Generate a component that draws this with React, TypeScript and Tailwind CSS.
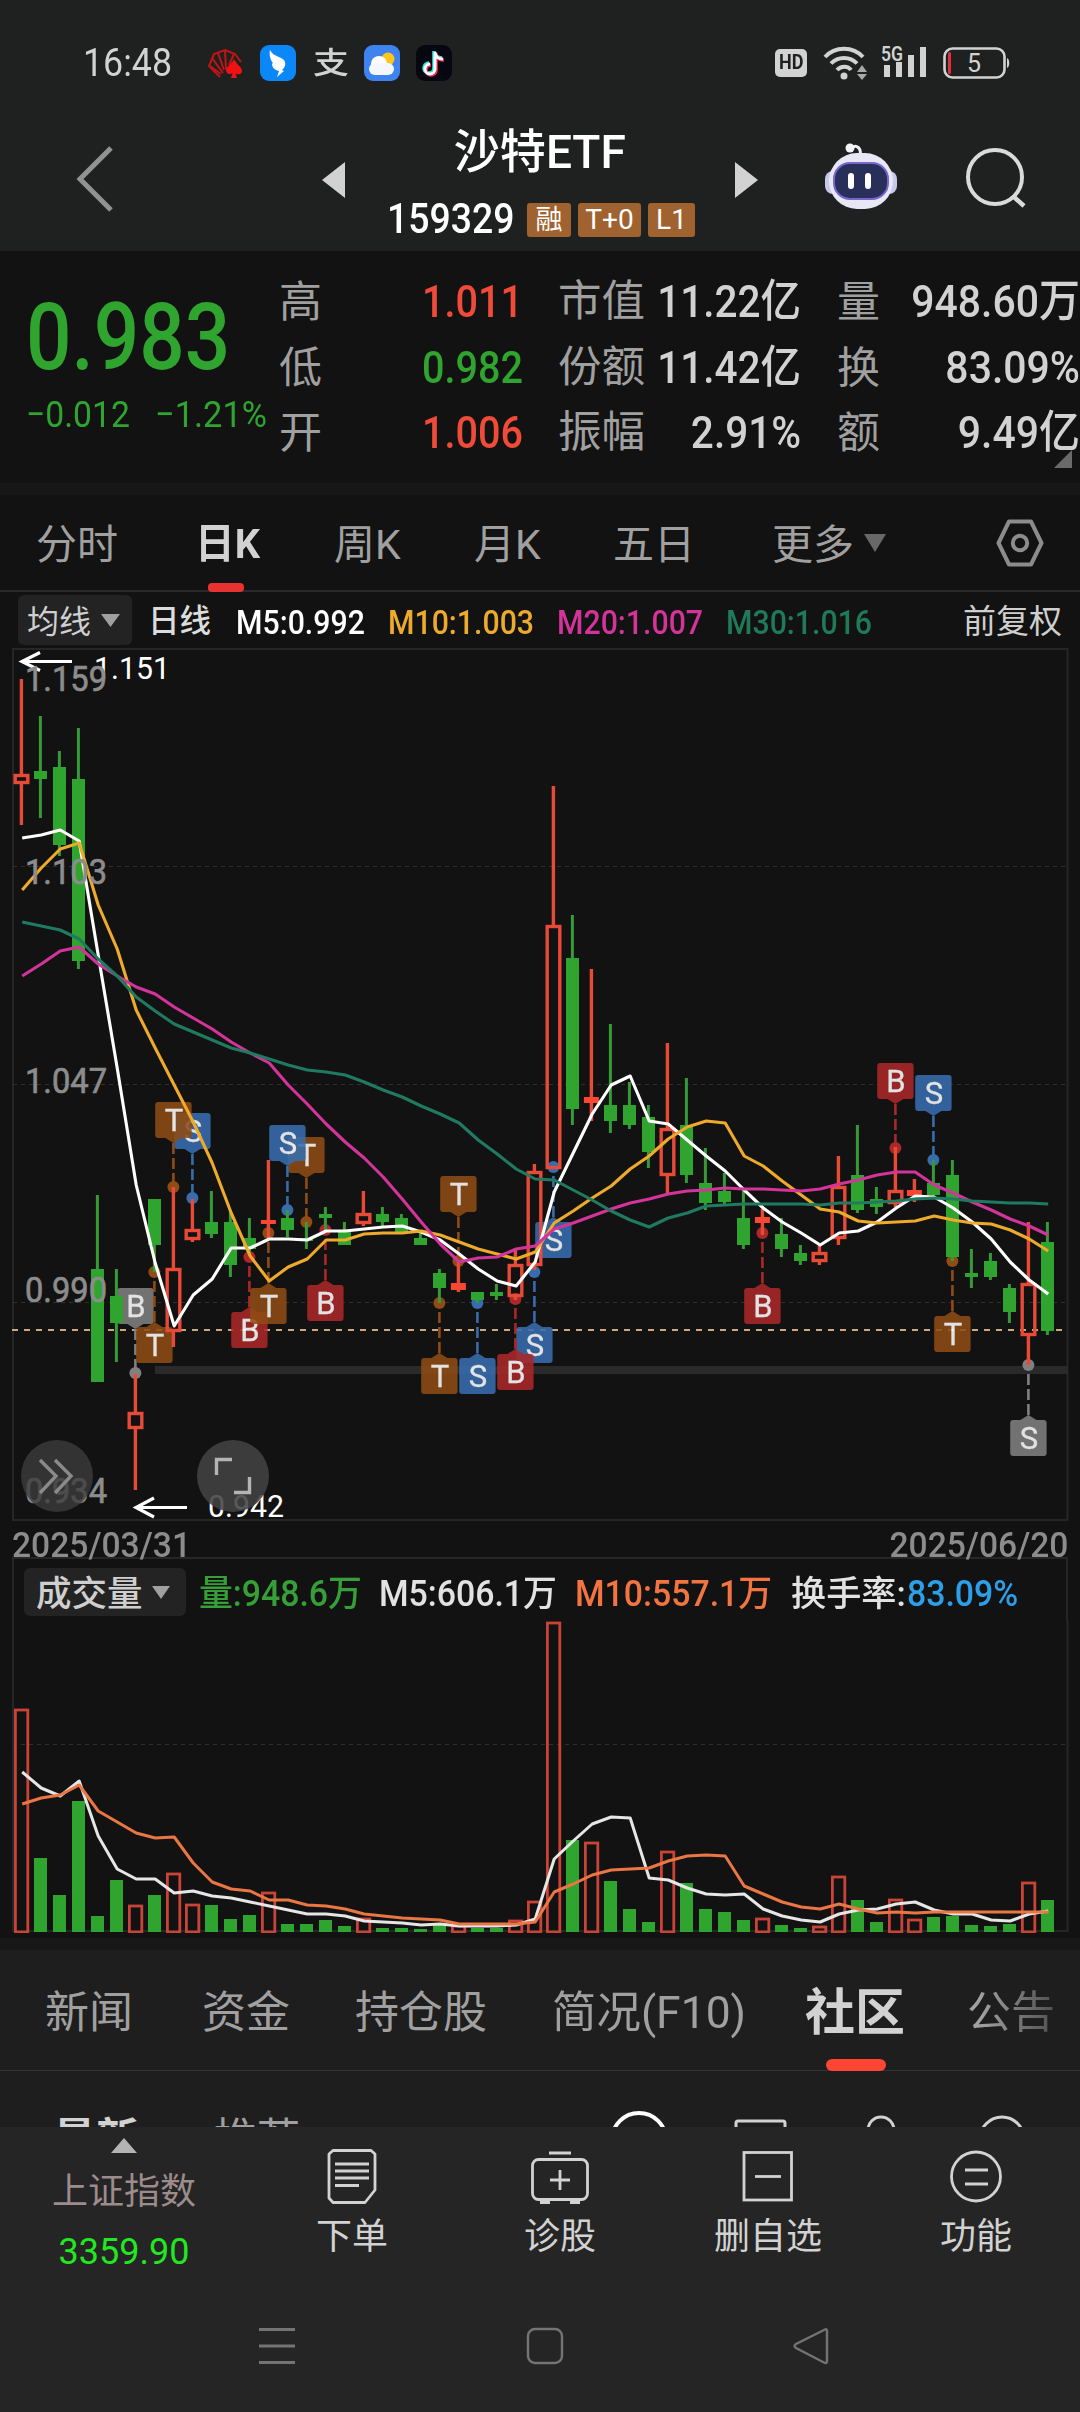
import React from "react";

type Candle = ["r" | "g", number, number, number, number];

// kind, high, body top, body bottom, low
const CANDLES: Candle[] = [
  ["r", 679, 774, 784, 825], ["g", 716, 771, 779, 818], ["g", 751, 767, 845, 856], ["g", 728, 779, 961, 969],
  ["g", 1195, 1269, 1382, 1382], ["g", 1269, 1296, 1323, 1362], ["r", 1374, 1412, 1429, 1490], ["g", 1199, 1199, 1245, 1272],
  ["r", 1187, 1268, 1332, 1347], ["r", 1199, 1229, 1240, 1242], ["g", 1191, 1222, 1234, 1238], ["g", 1210, 1222, 1265, 1277],
  ["g", 1218, 1238, 1249, 1256], ["r", 1160, 1220, 1224, 1238], ["g", 1210, 1218, 1230, 1237], ["g", 1222, 1238, 1241, 1249],
  ["g", 1207, 1214, 1218, 1230], ["g", 1222, 1232, 1245, 1245], ["r", 1191, 1213, 1224, 1226], ["g", 1207, 1214, 1222, 1226],
  ["g", 1214, 1218, 1232, 1232], ["g", 1233, 1238, 1245, 1245], ["g", 1269, 1273, 1288, 1303], ["r", 1260, 1283, 1290, 1292],
  ["g", 1292, 1292, 1300, 1303], ["g", 1284, 1292, 1296, 1300], ["r", 1250, 1264, 1297, 1300], ["r", 1164, 1171, 1266, 1270],
  ["r", 786, 925, 1169, 1169], ["g", 915, 958, 1109, 1125], ["r", 969, 1097, 1103, 1121], ["g", 1024, 1105, 1121, 1133],
  ["g", 1082, 1105, 1125, 1129], ["g", 1105, 1117, 1152, 1168], ["r", 1043, 1128, 1176, 1193], ["g", 1078, 1125, 1175, 1183],
  ["g", 1148, 1183, 1203, 1210], ["g", 1173, 1191, 1202, 1206], ["g", 1190, 1218, 1245, 1249], ["r", 1209, 1217, 1223, 1235],
  ["g", 1218, 1234, 1249, 1257], ["g", 1245, 1253, 1261, 1265], ["r", 1245, 1252, 1262, 1265], ["r", 1156, 1186, 1239, 1245],
  ["g", 1125, 1175, 1210, 1213], ["g", 1187, 1199, 1207, 1214], ["r", 1147, 1190, 1204, 1207], ["r", 1179, 1190, 1196, 1202],
  ["g", 1160, 1183, 1195, 1199], ["g", 1160, 1175, 1257, 1261], ["g", 1249, 1273, 1277, 1288], ["g", 1253, 1261, 1277, 1280],
  ["g", 1284, 1288, 1312, 1323], ["r", 1222, 1283, 1336, 1365], ["g", 1222, 1242, 1331, 1335],
];

const MA5 = [838, 835, 830, 841, 955, 1068, 1185, 1263, 1326, 1295, 1279, 1248, 1248, 1239, 1239, 1240, 1231, 1231, 1229, 1227, 1226, 1232, 1240, 1254, 1269, 1281, 1286, 1262, 1192, 1153, 1114, 1085, 1076, 1121, 1124, 1140, 1156, 1171, 1190, 1208, 1222, 1233, 1245, 1233, 1231, 1222, 1208, 1196, 1197, 1208, 1222, 1239, 1262, 1280, 1294];
const MA10 = [890, 868, 849, 843, 905, 949, 1010, 1048, 1085, 1122, 1163, 1213, 1256, 1281, 1267, 1259, 1240, 1240, 1234, 1233, 1233, 1231, 1235, 1242, 1249, 1254, 1259, 1252, 1223, 1211, 1198, 1186, 1169, 1156, 1139, 1127, 1121, 1123, 1156, 1166, 1181, 1195, 1209, 1212, 1221, 1223, 1222, 1221, 1216, 1220, 1223, 1224, 1230, 1239, 1251];
const MA20 = [976, 964, 951, 947, 964, 976, 987, 994, 1007, 1018, 1029, 1042, 1053, 1063, 1085, 1104, 1124, 1142, 1158, 1177, 1199, 1222, 1244, 1262, 1258, 1257, 1249, 1246, 1229, 1223, 1216, 1209, 1203, 1199, 1194, 1191, 1190, 1188, 1189, 1189, 1190, 1191, 1189, 1184, 1180, 1175, 1172, 1172, 1185, 1193, 1202, 1210, 1219, 1226, 1235];
const MA30 = [922, 926, 930, 939, 959, 976, 997, 1011, 1024, 1032, 1040, 1048, 1053, 1059, 1065, 1070, 1072, 1075, 1082, 1090, 1097, 1106, 1114, 1123, 1140, 1154, 1169, 1179, 1180, 1190, 1200, 1211, 1220, 1227, 1218, 1213, 1206, 1205, 1204, 1204, 1204, 1204, 1205, 1203, 1203, 1202, 1201, 1199, 1198, 1199, 1201, 1202, 1203, 1203, 1204];

const VOLUMES = [1709, 1858, 1895, 1801, 1916, 1880, 1905, 1895, 1873, 1904, 1905, 1919, 1915, 1892, 1924, 1924, 1920, 1926, 1918, 1928, 1928, 1929, 1925, 1925, 1928, 1928, 1920, 1901, 1622, 1840, 1842, 1881, 1909, 1922, 1851, 1883, 1909, 1912, 1920, 1918, 1925, 1928, 1926, 1876, 1900, 1922, 1899, 1919, 1917, 1916, 1925, 1926, 1924, 1882, 1900];
const VOL5 = [1772, 1788, 1796, 1781, 1836, 1869, 1879, 1879, 1893, 1891, 1896, 1898, 1902, 1906, 1910, 1914, 1914, 1916, 1921, 1922, 1923, 1925, 1924, 1926, 1926, 1926, 1925, 1919, 1859, 1841, 1824, 1817, 1818, 1878, 1880, 1888, 1894, 1895, 1894, 1909, 1916, 1920, 1922, 1914, 1910, 1909, 1904, 1902, 1910, 1914, 1914, 1920, 1921, 1914, 1911];
const VOL10 = [1804, 1798, 1795, 1785, 1811, 1822, 1833, 1838, 1837, 1863, 1882, 1889, 1891, 1900, 1900, 1905, 1906, 1909, 1914, 1916, 1918, 1919, 1920, 1924, 1924, 1924, 1924, 1922, 1892, 1884, 1875, 1870, 1869, 1868, 1861, 1856, 1855, 1856, 1886, 1894, 1902, 1907, 1909, 1904, 1909, 1913, 1912, 1913, 1912, 1912, 1912, 1912, 1912, 1912, 1912];

const BROWN = "#8f4c14";
const BLUE = "#376dae";
const RED = "#ab2829";
const GRAY = "#808080";

interface Mark {
  day: number;
  dot: number;
  label: string;
  color: string;
  above?: boolean;
}

const MARKS: Mark[] = [
  { day: 6, dot: 1373, label: "B", color: GRAY, above: true },
  { day: 7, dot: 1272, label: "T", color: BROWN },
  { day: 9, dot: 1198, label: "S", color: BLUE, above: true },
  { day: 8, dot: 1187, label: "T", color: BROWN, above: true },
  { day: 12, dot: 1257, label: "B", color: RED },
  { day: 13, dot: 1233, label: "T", color: BROWN },
  { day: 15, dot: 1222, label: "T", color: BROWN, above: true },
  { day: 14, dot: 1210, label: "S", color: BLUE, above: true },
  { day: 16, dot: 1230, label: "B", color: RED },
  { day: 22, dot: 1303, label: "T", color: BROWN },
  { day: 23, dot: 1261, label: "T", color: BROWN, above: true },
  { day: 24, dot: 1303, label: "S", color: BLUE },
  { day: 27, dot: 1272, label: "S", color: BLUE },
  { day: 26, dot: 1299, label: "B", color: RED },
  { day: 28, dot: 1167, label: "S", color: BLUE },
  { day: 39, dot: 1233, label: "B", color: RED },
  { day: 46, dot: 1148, label: "B", color: RED, above: true },
  { day: 48, dot: 1160, label: "S", color: BLUE, above: true },
  { day: 49, dot: 1261, label: "T", color: BROWN },
  { day: 53, dot: 1365, label: "S", color: GRAY },
];

const dayX = (i: number) => 21.4 + i * 19;
const toPoints = (ys: number[]) => ys.map((y, i) => `${dayX(i) + 0.8},${y}`).join(" ");

function MarkFlag({ mark }: { mark: Mark }) {
  const x = dayX(mark.day);
  const top = mark.above ? mark.dot - 85 : mark.dot + 55;
  const tip = mark.above ? top + 41 : top - 5;
  const base = mark.above ? top + 36 : top;
  return (
    <g>
      <line x1={x} y1={tip} x2={x} y2={mark.dot} stroke={mark.color} strokeWidth="2.6" strokeDasharray="11 4" />
      <circle cx={x} cy={mark.dot} r="6" fill={mark.color} />
      <g opacity="0.88">
        <rect x={x - 18.2} y={top} width="36.4" height="36" rx="3" fill={mark.color} />
        <path d={`M${x - 8} ${base}L${x} ${tip}L${x + 8} ${base}Z`} fill={mark.color} />
        <text x={x + 0.5} y={top + 29} textAnchor="middle" fontSize="31" fill="#fff" stroke="#fff" strokeWidth="0.3">
          {mark.label}
        </text>
      </g>
    </g>
  );
}

function CandleBar({ candle, i }: { candle: Candle; i: number }) {
  const [kind, high, top, bottom, low] = candle;
  const x = dayX(i);
  if (kind === "g") {
    return (
      <g>
        <rect x={x - 1.5} y={high} width="3" height={low - high} fill="#379a38" />
        <rect x={x - 6.4} y={top} width="13" height={bottom - top} fill="#2fa52f" />
      </g>
    );
  }
  return (
    <g stroke="#e84a38" strokeWidth="3.4">
      <line x1={x} y1={high} x2={x} y2={top} />
      <line x1={x} y1={bottom} x2={x} y2={low} />
      {bottom - top < 8 ? (
        <rect x={x - 7.5} y={top} width="15" height={bottom - top} fill="#fb4632" stroke="none" />
      ) : (
        <rect x={x - 6.2} y={top + 1.5} width="12.6" height={bottom - top - 3} fill="none" />
      )}
    </g>
  );
}

function PriceChart() {
  const labels: [string, number][] = [["1.159", 691], ["1.103", 884], ["1.047", 1093], ["0.990", 1302], ["0.934", 1503]];
  return (
    <svg className="block h-[873px] w-[1080px]" viewBox="0 648 1080 873">
      <rect x="13" y="649" width="1054.5" height="871" fill="none" stroke="#262626" strokeWidth="2" />
      {[866.5, 1084.5, 1302.5].map((y) => (
        <line key={y} x1="13" y1={y} x2="1067" y2={y} stroke="#303030" strokeWidth="1.2" strokeDasharray="4 4" />
      ))}
      <rect x="155" y="1366" width="913" height="8" fill="#2a2a2a" />
      <line x1="12" y1="1330" x2="1064" y2="1330" stroke="#c9aa80" strokeWidth="2" strokeDasharray="6 6" />
      {MARKS.map((mark) => (
        <MarkFlag key={mark.day} mark={mark} />
      ))}
      {CANDLES.map((candle, i) => (
        <CandleBar key={i} candle={candle} i={i} />
      ))}
      <g fill="none" strokeWidth="3.1" strokeLinejoin="round">
        <polyline points={toPoints(MA5)} stroke="#fff" />
        <polyline points={toPoints(MA10)} stroke="#eeab2b" />
        <polyline points={toPoints(MA20)} stroke="#d2349a" />
        <polyline points={toPoints(MA30)} stroke="#1f7a60" />
      </g>
      <g fill="none" stroke="#fff" strokeWidth="3.2">
        <path d="M72 661.5H22M40 652.5L22 661.5L40 670.5" />
        <path d="M187 1507.5H136M154 1498L136 1507.5L154 1517" />
      </g>
      <g fontSize="30.5" fill="#fff">
        <text x="94" y="679" textLength="76" lengthAdjust="spacingAndGlyphs">1.151</text>
        <text x="208" y="1517" textLength="76" lengthAdjust="spacingAndGlyphs">0.942</text>
      </g>
      <g fontSize="35" fill="#8c8c8c" stroke="#8c8c8c" strokeWidth="0.7">
        {labels.map(([label, y]) => (
          <text key={label} x="25" y={y} textLength="82" lengthAdjust="spacingAndGlyphs">
            {label}
          </text>
        ))}
      </g>
      <circle cx="57" cy="1476" r="36" fill="#3c3c3c" opacity="0.8" />
      <circle cx="233" cy="1476" r="36" fill="#424242" opacity="0.88" />
      <g fill="none" strokeWidth="3.4">
        <path d="M40 1460L56 1476L40 1493M55 1460L71 1476L55 1493" stroke="#8a8a8a" />
        <path d="M216.5 1475V1459.5H232M234 1492.5H249.5V1477" stroke="#b4b4b4" />
      </g>
    </svg>
  );
}

function VolumeChart() {
  return (
    <svg className="block h-[312px] w-[1080px]" viewBox="0 1621 1080 312">
      <path d="M13 1621V1931H1067.5V1621" fill="none" stroke="#262626" strokeWidth="2" />
      <line x1="13" y1="1744.5" x2="1067" y2="1744.5" stroke="#303030" strokeWidth="1.2" strokeDasharray="4 4" />
      {VOLUMES.map((top, i) =>
        CANDLES[i][0] === "g" ? (
          <rect key={i} x={dayX(i) - 6.4} y={top} width="13" height={1932 - top} fill="#2fa52f" />
        ) : (
          <rect key={i} x={dayX(i) - 6} y={top + 1} width="12.4" height={1931 - top} fill="none" stroke="#c94336" strokeWidth="2.8" />
        ),
      )}
      <g fill="none" strokeWidth="3" strokeLinejoin="round">
        <polyline points={toPoints(VOL5)} stroke="#e6e6e6" />
        <polyline points={toPoints(VOL10)} stroke="#ea7644" />
      </g>
    </svg>
  );
}

function StatusBar() {
  return (
    <div className="flex h-[126px] items-center pl-[83px] text-[#d2d2d2]">
      <div className="w-[123px]">
        <span className="inline-block origin-left scale-x-[.94] text-[38px] leading-none">16:48</span>
      </div>
      <svg className="h-9 w-[38px]" viewBox="0 0 38 36">
        <g fill="none" stroke="#c21414" strokeWidth="2">
          <path d="M14 32L3 21L8 9L19 5L29 9L35 17" />
          <path d="M17 28L6 13M18 25L12 8M20 24L19 6M23 20L28 9M4 21L15 29" />
        </g>
        <path d="M28 14C31 20 36 22 36 26C36 30 31 30 29.5 28L31 33H25L26.5 28C24 30 20 29 20 25C21 21 26 19 28 14Z" fill="#f01212" />
      </svg>
      <svg className="ml-4 size-9" viewBox="0 0 36 36">
        <rect width="36" height="36" rx="9" fill="#0b87f8" />
        <path d="M10 5C13 12 24 12 25 17C26 21 24 23 22 25L24 26L17 32L19 26C12 25 11 18 13 18C10 15 9 9 10 5Z" fill="#fff" />
      </svg>
      <span className="ml-[17px] w-[37px] scale-y-[.82] text-[36px] leading-none font-medium">支</span>
      <svg className="ml-3.5 size-9" viewBox="0 0 36 36">
        <rect width="36" height="36" rx="9" fill="#3f83ef" />
        <circle cx="24" cy="14" r="6.5" fill="#ffc61a" />
        <circle cx="15" cy="19" r="8" fill="#fff" />
        <rect x="5" y="18" width="25" height="12" rx="6" fill="#f4f7fb" />
      </svg>
      <svg className="ml-4 size-9" viewBox="0 0 36 36">
        <rect width="36" height="36" rx="9" fill="#070711" />
        <g fill="none" strokeWidth="3.6">
          <path d="M18 6V23A5 5 0 1 1 13 18M18 7C19 11 22 13 26 13" stroke="#22e6e2" />
          <path d="M20 8V25A5 5 0 1 1 15 20M20 9C21 13 24 15 28 15" stroke="#f8284f" />
          <path d="M19 7V24A5 5 0 1 1 14 19M19 8C20 12 23 14 27 14" stroke="#fff" strokeWidth="3" />
        </g>
      </svg>
      <div className="ml-[323px] flex h-7 w-8 items-center justify-center rounded-[5px] bg-[#d2d2d2] text-[21px] font-bold text-[#1f2120]">
        <span className="scale-x-[.86]">HD</span>
      </div>
      <svg className="ml-4 h-9 w-[46px]" viewBox="0 0 46 36">
        <g fill="none" stroke="#d2d2d2" strokeWidth="4">
          <path d="M2 12C12 1 30 1 40 12" />
          <path d="M8 18.5C15 11 27 11 34 18.5" />
          <path d="M14 25C18 20.5 25 20.5 28 25" />
        </g>
        <circle cx="21" cy="31" r="3.5" fill="#d2d2d2" />
        <path d="M34 27L39 20L44 27ZM34 29H44L39 35Z" fill="#a8a8a8" />
      </svg>
      <svg className="ml-3 h-9 w-[48px]" viewBox="0 0 48 36">
        <text x="0" y="16" fontSize="21" fontWeight="600" fill="#d2d2d2" textLength="22" lengthAdjust="spacingAndGlyphs">5G</text>
        <path d="M3 20H9V32H3ZM15 17H21V32H15ZM27 10H33V32H27ZM39 2H45V32H39Z" fill="#d2d2d2" />
      </svg>
      <svg className="ml-3.5 h-8 w-[68px]" viewBox="0 0 68 32">
        <rect x="1.5" y="1.5" width="60" height="29" rx="8" fill="none" stroke="#d2d2d2" strokeWidth="2.6" />
        <rect x="5" y="5" width="3" height="22" rx="1.5" fill="#e0303e" />
        <path d="M64 11V21C67 20 67 12 64 11Z" fill="#d2d2d2" />
        <text x="31" y="25" fontSize="25" fill="#d2d2d2" textAnchor="middle">5</text>
      </svg>
    </div>
  );
}

function TitleBar() {
  return (
    <div className="flex h-[125px] items-start">
      <svg className="mt-[19px] ml-[75px] h-[68px] w-[42px]" viewBox="0 0 42 68">
        <path d="M36 3L5 34L36 65" fill="none" stroke="#929292" strokeWidth="5" />
      </svg>
      <svg className="mt-9 ml-[205px] h-9 w-[23px]" viewBox="0 0 23 36">
        <path d="M0 18L23 0V36Z" fill="#d2d2d2" />
      </svg>
      <div className="flex w-[390px] flex-col items-center text-white">
        <div className="mt-1 text-[47px] leading-[44px] font-medium">
          <span className="inline-block scale-x-[.98] whitespace-nowrap">沙特ETF</span>
        </div>
        <div className="mt-[24px] flex w-[310px] items-center text-[28px] leading-[34px]">
          <div className="w-[142px] pt-1 pl-[2px]">
            <span className="inline-block origin-left scale-x-[.89] text-[42px] font-medium">159329</span>
          </div>
          <div className="flex gap-[7px]">
            <span className="h-[34px] w-11 rounded-[3px] bg-[#a0622f] text-center text-[27px]">融</span>
            <span className="h-[34px] w-[63px] rounded-[3px] bg-[#a0622f] text-center">T+0</span>
            <span className="h-[34px] w-[47px] rounded-[3px] bg-[#a0622f] text-center">L1</span>
          </div>
        </div>
      </div>
      <svg className="mt-9 h-9 w-[23px]" viewBox="0 0 23 36">
        <path d="M23 18L0 0V36Z" fill="#d2d2d2" />
      </svg>
      <svg className="mt-4 ml-[66px] h-[70px] w-[74px]" viewBox="0 0 74 70">
        <path d="M36 14C38 6 32 2 28 6" fill="none" stroke="#eeeef8" strokeWidth="3" />
        <circle cx="26" cy="6" r="4.5" fill="#f4f4fb" />
        <rect x="1" y="29" width="72" height="23" rx="8" fill="#c9c7ea" />
        <rect x="5" y="11" width="64" height="56" rx="28" fill="#e8e8f5" />
        <rect x="10" y="21" width="54" height="36" rx="16" fill="#28305a" stroke="#7865cf" strokeWidth="2" />
        <path d="M27 34V44M44 34V44" stroke="#fff" strokeWidth="6" strokeLinecap="round" />
      </svg>
      <svg className="mt-[20px] ml-[67px] h-[64px] w-[64px]" viewBox="0 0 64 64">
        <circle cx="30" cy="31" r="27" fill="none" stroke="#dadada" strokeWidth="4" />
        <path d="M49 51L59 60" stroke="#dadada" strokeWidth="4.5" />
      </svg>
    </div>
  );
}

function QuotePanel() {
  const rows = [
    { a: "高", av: "1.011", up: true, b: "市值", bv: "11.22亿", c: "量", cv: "948.60万" },
    { a: "低", av: "0.982", up: false, b: "份额", bv: "11.42亿", c: "换", cv: "83.09%" },
    { a: "开", av: "1.006", up: true, b: "振幅", bv: "2.91%", c: "额", cv: "9.49亿" },
  ];
  return (
    <div className="relative flex h-[232px] pt-[18px]">
      <div className="w-[279px] pl-[26px] text-[#2fa52f]">
        <div className="mt-[18px] h-[102px] origin-left scale-x-[.87] text-[92px] leading-[102px] font-medium">0.983</div>
        <div className="mt-[2px] flex h-[48px] text-[37px] leading-[48px] whitespace-nowrap">
          <span className="w-[129px] origin-left scale-x-[.91]">−0.012</span>
          <span className="origin-left scale-x-[.93]">−1.21%</span>
        </div>
      </div>
      <div className="flex-1 text-[45px] leading-[66px]">
        {rows.map((row) => (
          <div key={row.a} className="flex h-[65.5px] whitespace-nowrap">
            <span className="w-[120px] text-[43px] text-[#a0a0a0]">{row.a}</span>
            <span className={`w-[124px] origin-right scale-x-[.88] text-right font-medium ${row.up ? "text-[#f04a38]" : "text-[#2fa52f]"}`}>{row.av}</span>
            <span className="w-[96px] pl-[35px] text-[43.5px] text-[#a0a0a0]">{row.b}</span>
            <span className="flex w-[182px] origin-right scale-x-[.9] justify-end font-medium text-[#d2d2d2]">{row.bv}</span>
            <span className="w-[80px] pl-[36px] text-[43px] text-[#a0a0a0]">{row.c}</span>
            <span className="flex w-[199px] origin-right scale-x-[.91] justify-end font-medium text-[#d2d2d2]">{row.cv}</span>
          </div>
        ))}
      </div>
      <svg className="absolute right-2 bottom-[15px] h-[18px] w-[18px]" viewBox="0 0 18 18">
        <path d="M18 0V18H0Z" fill="#6a6a6a" />
      </svg>
    </div>
  );
}

function PeriodTabs() {
  return (
    <div className="flex h-[97px] items-center border-b-2 border-[#2a2a2a] text-[41px] leading-[95px] text-[#a0a0a0]">
      <span className="w-[158px] pt-[5px] pl-[36px]">分时</span>
      <div className="relative w-[140px] pl-[37px] font-bold text-[#d2d2d2]">
        <span className="inline-block h-[95px] origin-left scale-x-[.97] pt-[3px]">日K</span>
        <span className="absolute bottom-0 left-[50px] h-[9px] w-9 rounded-[4px] bg-[#e83131]" />
      </div>
      <span className="w-[141px] pt-[5px] pl-[36px]">周K</span>
      <span className="w-[139px] pt-[5px] pl-[35px]">月K</span>
      <span className="w-[158px] pt-[5px] pl-[35px]">五日</span>
      <span className="w-[128px] pt-[5px] pl-[36px]">更多</span>
      <svg className="h-[18px] w-[22px]" viewBox="0 0 22 18">
        <path d="M0 0H22L11 18Z" fill="#686868" />
      </svg>
      <svg className="ml-[110px] h-[50px] w-12" viewBox="0 0 48 50">
        <path d="M13 3.5H35L45.5 25L35 46.5H13L2.5 25Z" fill="none" stroke="#8c8c8c" strokeWidth="4" strokeLinejoin="round" />
        <circle cx="24" cy="25" r="7.2" fill="none" stroke="#8c8c8c" strokeWidth="4" />
      </svg>
    </div>
  );
}

function AverageRow() {
  return (
    <div className="flex h-14 items-center text-[34px] leading-[50px] font-medium whitespace-nowrap">
      <div className="ml-[18px] flex h-[50px] w-[114px] items-center rounded-[6px] bg-[#232323] pl-[9px] text-[32px] font-normal text-[#cfcfcf]">
        <span className="pt-[3px]">均线</span>
        <svg className="ml-[10px] h-[13px] w-[19px]" viewBox="0 0 19 13">
          <path d="M0 0H19L9.5 13Z" fill="#a0a0a0" />
        </svg>
      </div>
      <span className="ml-4 w-[88px] pt-1 text-[31.5px] text-[#dcdcdc]">日线</span>
      <span className="w-[152px] origin-left scale-x-[.89] pt-[3px] text-white">M5:0.992</span>
      <span className="w-[169px] origin-left scale-x-[.89] pt-[3px] text-[#eeab2b]">M10:1.003</span>
      <span className="w-[169px] origin-left scale-x-[.89] pt-[3px] text-[#d2349a]">M20:1.007</span>
      <span className="w-[237px] origin-left scale-x-[.89] pt-[3px] text-[#1f7a5a]">M30:1.016</span>
      <span className="pt-1 text-[33px] font-normal text-[#cfcfcf]">前复权</span>
    </div>
  );
}

function VolumeHeader() {
  return (
    <div className="mx-3 flex h-[64px] items-center border-x-2 border-t-2 border-[#262626] pt-1 text-[36px] leading-[50px] whitespace-nowrap">
      <div className="ml-[10px] flex h-12 w-[162px] items-center rounded-[6px] bg-[#232323] pl-[12px] text-[35.5px] text-[#cfcfcf]">
        <span className="pt-[3px] font-medium">成交量</span>
        <svg className="ml-[9px] h-[13px] w-[18px]" viewBox="0 0 18 13">
          <path d="M0 0H18L9 13Z" fill="#a0a0a0" />
        </svg>
      </div>
      <span className="ml-[13px] w-[180px] origin-left scale-x-[.94] pt-[3px] font-medium text-[#379f38]">量:948.6万</span>
      <span className="w-[196px] origin-left scale-x-[.94] pt-[3px] font-medium text-[#e2e2e2]">M5:606.1万</span>
      <span className="w-[216px] origin-left scale-x-[.94] pt-[3px] font-medium text-[#f27541]">M10:557.1万</span>
      <span className="w-[116px] origin-left scale-x-[.99] pt-[3px] text-[35.5px] font-medium text-[#e2e2e2]">换手率:</span>
      <span className="origin-left scale-x-[.94] pt-[3px] font-medium text-[#2d9fe8]">83.09%</span>
    </div>
  );
}

function ContentTabs() {
  return (
    <div className="flex h-[121px] items-center border-b border-[#353535] text-[44px] leading-[116px] whitespace-nowrap text-[#a0a0a0]">
      <span className="w-[157px] pt-[5px] pl-[45px]">新闻</span>
      <span className="w-[153px] pt-[5px] pl-[45px]">资金</span>
      <span className="w-[198px] pt-[5px] pl-[45px]">持仓股</span>
      <span className="w-[252px] pt-[5px] pl-[44px]">
        <span className="inline-block origin-left scale-x-[1.01]">简况(F10)</span>
      </span>
      <div className="relative h-[121px] w-[163px] pt-[5px] pl-[45px] text-[50px] font-bold text-[#d2d2d2]">
        社区
        <span className="absolute bottom-0 left-[66px] h-3 w-[60px] rounded-[6px] bg-[#ff4533]" />
      </div>
      <span className="bg-gradient-to-r from-[#a0a0a0] from-45% to-[#505050] bg-clip-text pt-[5px] pl-[44px] text-transparent">公告</span>
    </div>
  );
}

function FeedRow() {
  return (
    <div className="flex h-14 items-start overflow-hidden text-[43px] leading-none whitespace-nowrap">
      <span className="mt-[47px] w-[160px] pl-[53px] font-bold text-[#d2d2d2]">最新</span>
      <span className="mt-[47px] w-[399px] pl-[54px] text-[#a0a0a0]">推荐</span>
      <svg className="mt-10 h-4 w-[500px]" viewBox="0 0 500 16">
        <g fill="none" stroke="#d2d2d2" strokeWidth="3">
          <circle cx="80" cy="29" r="27" stroke="#fff" strokeWidth="4" />
          <rect x="177" y="10" width="49" height="40" rx="2" />
          <circle cx="322" cy="19" r="13" />
          <circle cx="443" cy="28" r="22" />
        </g>
      </svg>
    </div>
  );
}

interface ActionProps {
  label: string;
  children: React.ReactNode;
}

function Action({ label, children }: ActionProps) {
  return (
    <div className="flex w-52 flex-col items-center pt-[19px]">
      <svg className="h-[60px] w-[60px]" viewBox="0 0 60 60" fill="none" stroke="#d2d2d2" strokeWidth="2.8">
        {children}
      </svg>
      <span className="mt-[7px] text-[36px] leading-[48px] text-[#d2d2d2]">{label}</span>
    </div>
  );
}

function BottomBar() {
  return (
    <div className="flex h-[170px]">
      <div className="flex w-[248px] flex-col items-center pt-[11px]">
        <svg className="h-[15px] w-[26px]" viewBox="0 0 26 15">
          <path d="M13 0L26 15H0Z" fill="#b4b4b4" />
        </svg>
        <span className="mt-[15px] text-[36px] leading-[48px] text-[#9c8c8c]">上证指数</span>
        <span className="mt-[12px] text-[36px] leading-[48px] text-[#22e822]">3359.90</span>
      </div>
      <Action label="下单">
        <path d="M11 4.5H49L53 8V44L43 56.5H11L7 52V8Z" strokeLinejoin="round" />
        <path d="M13 18H47M13 25H47M13 32H47M13 39.5H37" />
      </Action>
      <Action label="诊股">
        <rect x="2.5" y="13.5" width="55" height="40" rx="6" />
        <path d="M19 7H41M30 24V44M20 34H40M10 56.5H20M40 56.5H50" />
      </Action>
      <Action label="删自选">
        <rect x="6" y="6.5" width="47.5" height="47.5" />
        <path d="M17 30.5H43" />
      </Action>
      <Action label="功能">
        <circle cx="30" cy="30.5" r="24.5" />
        <path d="M19 24H42M19 38H42" />
      </Action>
    </div>
  );
}

function SystemNav() {
  return (
    <div className="flex h-[115px] items-start pt-[29px] pl-[258px]">
      <svg className="h-10 w-[38px]" viewBox="0 0 38 40">
        <path d="M1 3.5H37M1 20H37M1 36.5H37" stroke="#747474" strokeWidth="3" />
      </svg>
      <svg className="ml-[230px] h-10 w-[38px]" viewBox="0 0 38 40">
        <rect x="2" y="3" width="34" height="34" rx="7" fill="none" stroke="#747474" strokeWidth="2.4" />
      </svg>
      <svg className="ml-[228px] h-10 w-[38px]" viewBox="0 0 38 40">
        <path d="M33 3.5Q35 2.5 35 5V35Q35 38 32 36.5L4 22Q1 20 4 18Z" fill="none" stroke="#747474" strokeWidth="2.4" />
      </svg>
    </div>
  );
}

export default function App() {
  return (
    <div className="h-[2412px] w-[1080px] overflow-hidden bg-[#121212] font-['Roboto','Noto_Sans_CJK_SC',sans-serif]">
      <header className="h-[251px] bg-[#1f2120]">
        <StatusBar />
        <TitleBar />
      </header>
      <QuotePanel />
      <div className="h-3 bg-[#171717]" />
      <PeriodTabs />
      <AverageRow />
      <PriceChart />
      <div className="flex h-9 items-end justify-between px-3 text-[35px] leading-[48px] font-medium text-[#8c8c8c]">
        <span className="-mb-[13px] origin-left scale-x-[.96]">2025/03/31</span>
        <span className="-mb-[13px] origin-right scale-x-[.96]">2025/06/20</span>
      </div>
      <VolumeHeader />
      <VolumeChart />
      <div className="mt-[5px] h-3 bg-[#171717]" />
      <main className="h-[177px] bg-[#1e1e1e]">
        <ContentTabs />
        <FeedRow />
      </main>
      <footer className="h-[285px] bg-[#252525]">
        <BottomBar />
        <SystemNav />
      </footer>
    </div>
  );
}
